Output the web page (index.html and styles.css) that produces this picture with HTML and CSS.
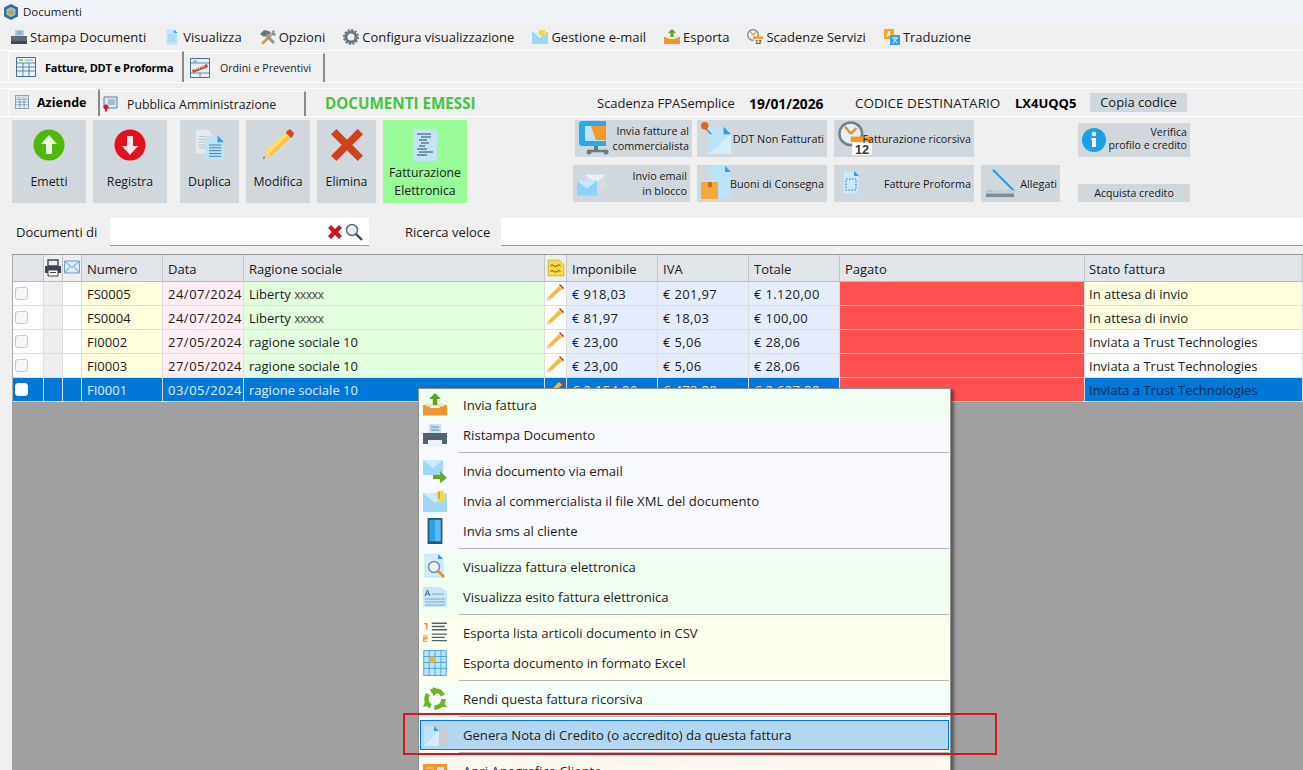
FILE: index.html
```html
<!DOCTYPE html>
<html lang="it">
<head>
<meta charset="utf-8">
<title>Documenti</title>
<link rel="stylesheet" href="styles.css">
</head>
<body>
<svg class="defs" width="0" height="0">
  <defs>
    <symbol id="i-logo" viewBox="0 0 16 16"><path d="M8 0l7 3.500v9L8 16l-7-3.500v-9z" fill="#3f6f8f"/><path d="M8 3l4.500 2.300v5.400L8 13l-4.500-2.300V5.300z" fill="#8fc0d8"/><path d="M5.500 6.500h5v4h-5z" fill="#c9a227"/></symbol>
    <symbol id="i-printer" viewBox="0 0 16 16"><path d="M4 1h9v7H4z" fill="#b9d3e6"/><path d="M5.500 3h6M5.500 5h6" stroke="#6f8ea5"/><path d="M0 7h16v7H0z" fill="#5d6b78"/><path d="M0 12h16v3H0z" fill="#3f4a54"/></symbol>
    <symbol id="i-doc" viewBox="0 0 16 16"><path d="M2.500 0.500h7.500l3.500 3.500v11.500h-11z" fill="#bfe3f8"/><path d="M10 .5l3.500 3.500H10z" fill="#3aa6e0"/><path d="M4.500 6h7M4.500 8h7M4.500 10h7M4.500 12h7" stroke="#8fc7e8" stroke-width=".7"/></symbol>
    <symbol id="i-tools" viewBox="0 0 16 16"><path d="M1 14L10 5l2 2-8.500 8.500z" fill="#e09a3e"/><path d="M15 13L6.500 4.500 4.500 6.500l8.500 8.500z" fill="#8a97a2"/><path d="M0 5l4-4 5 1 2 2-2 2-2-1-3 3z" fill="#6a7782"/><path d="M11 6l1-4 3-1-1 3 2 0-1 3z" fill="#8a97a2"/></symbol>
    <symbol id="i-gear" viewBox="0 0 16 16"><circle cx="8" cy="8" r="5" fill="none" stroke="#6b7780" stroke-width="3"/><circle cx="8" cy="8" r="7" fill="none" stroke="#6b7780" stroke-width="2" stroke-dasharray="2.200 1.460"/></symbol>
    <symbol id="i-mailtag" viewBox="0 0 16 16"><path d="M0 3h16v12H0z" fill="#9ed6f6"/><path d="M0 3l8 7 8-7" fill="#d5eefb" stroke="#6fbce8" stroke-width=".6"/><path d="M7 1h6v6l-3 1-3-3z" fill="#f6d64a"/></symbol>
    <symbol id="i-export" viewBox="0 0 16 16"><path d="M0 8h4l1 2h6l1-2h4v7H0z" fill="#f0962e"/><path d="M2 7h12v2H2z" fill="#f7e3c4"/><path d="M8 0l4 4H9.500v4h-3V4H4z" fill="#57a81c"/></symbol>
    <symbol id="i-clock" viewBox="0 0 24 24"><circle cx="9" cy="9" r="8" fill="#e9eef2" stroke="#75818a" stroke-width="1.800"/><path d="M9 9L5 4M9 9l4-4" stroke="#e8962e" stroke-width="1.800"/><path d="M9 11h15v4H9z" fill="#f59a23"/><path d="M10 15h14v9H10z" fill="#fff"/><text x="17" y="23" class="svg-num">12</text></symbol>
    <symbol id="i-trans" viewBox="0 0 16 16"><path d="M0 0h10v10H0z" fill="#f7a823"/><path d="M3 8l2-6 2 6M4 6h2" stroke="#fff" fill="none"/><path d="M6 6h10v10H6z" fill="#31a5e6"/><path d="M8 9h6M11 8v1M9 14l4-5M9.500 10l4 4" stroke="#fff" fill="none" stroke-width=".9"/></symbol>
    <symbol id="i-table" viewBox="0 0 20 20"><path d="M.5.5h19v19H.5z" fill="#e6f1f8" stroke="#45718f"/><path d="M1 6h18M1 10h18M1 14h18M7 6v13M13 6v13" stroke="#45718f" stroke-width=".8"/><path d="M3 2.500h4v1.500H3z" fill="#7fc56a"/><path d="M9 2.500h8v1.500H9z" fill="#a9c3d4"/></symbol>
    <symbol id="i-tablered" viewBox="0 0 20 20"><path d="M.5.5h19v19H.5z" fill="#e6f1f8" stroke="#45718f"/><path d="M1 5h18M1 15h18M10 15v4" stroke="#45718f" stroke-width=".8"/><path d="M3 2.500h4v1.500H3z" fill="#7fc56a"/><path d="M2 12L17 6l1 3L3 15z" fill="#d4403a"/><path d="M4.500 11.800l10-4" stroke="#fff" stroke-width="1.200" stroke-dasharray="1.500 .8"/></symbol>
    <symbol id="i-cert" viewBox="0 0 16 16"><path d="M2 1h13v11H2z" fill="#d9e7f1" stroke="#5a7f9a"/><path d="M6 4h7M6 6h7M6 8h7" stroke="#5a7f9a" stroke-width=".8"/><circle cx="4" cy="11" r="2.500" fill="#c0282e"/><path d="M3 13v3l1-1 1 1v-3z" fill="#c0282e"/></symbol>
    <symbol id="i-up" viewBox="0 0 32 32"><circle cx="16" cy="16" r="15.500" fill="#4eb90a"/><path d="M16 6l8 9h-5v10h-6V15H8z" fill="#eaf6df"/></symbol>
    <symbol id="i-down" viewBox="0 0 32 32"><circle cx="16" cy="16" r="15.500" fill="#e3101e"/><path d="M16 26L8 17h5V7h6v10h5z" fill="#fbe9e9"/></symbol>
    <symbol id="i-dup" viewBox="0 0 32 34"><path d="M1 1h13l5 5v20H1z" fill="#e6e9ec"/><path d="M4 8h11M4 11h11M4 14h11M4 17h11M4 20h11" stroke="#b5bec6"/><path d="M11 7h13l7 7v19H11z" fill="#bde3f9"/><path d="M24 7l7 7h-7z" fill="#2f9fdf"/><path d="M15 17h13M15 20h13M15 23h13M15 26h13M15 29h13" stroke="#3d7dab"/></symbol>
    <symbol id="i-pencil" viewBox="0 0 32 32"><path d="M23 4l5 5L9 27l-6 2 1-7z" fill="#f7c835"/><path d="M23 4l2.500 2.500L6.500 25l-3-3z" fill="#fbe06c"/><path d="M25 2l3-2 4 4-1 3-2 2-5-5z" fill="#cc4a22"/><path d="M4 22l5 5-7 3z" fill="#ecd3a8"/><path d="M2 27l1 2-2 1z" fill="#4a5158"/></symbol>
    <symbol id="i-x" viewBox="0 0 30 30"><path d="M5 0l10 10L25 0l5 5-10 10 10 10-5 5-10-10L5 30l-5-5 10-10L0 5z" fill="#d0421c"/></symbol>
    <symbol id="i-xred" viewBox="0 0 14 14"><path d="M3 0l4 4 4-4 3 3-4 4 4 4-3 3-4-4-4 4-3-3 4-4-4-4z" fill="#c8161c"/></symbol>
    <symbol id="i-fe" viewBox="0 0 24 32"><path d="M0 0h24v32H0z" fill="#c3e4f7"/><path d="M4 5h14M8 8h10M6 11h8M8 14h8M6 17h6M4 20h10M6 23h14M4 26h10" stroke="#33475a" stroke-width="1.200"/></symbol>
    <symbol id="i-monitor" viewBox="0 0 30 34"><path d="M3 0h24v25H3q-3 0-3-3V3q0-3 3-3z" fill="#2da8ea"/><path d="M6 5h21v15H6z" fill="#bfe3f8"/><path d="M12 5h15v14H17z" fill="#f59a23"/><path d="M15 25h4v5h-4z" fill="#6c7a86"/><path d="M10 30h17" stroke="#6c7a86" stroke-width="2.500"/><circle cx="10" cy="31" r="2.500" fill="#6c7a86"/><circle cx="27" cy="31" r="2.500" fill="#6c7a86"/></symbol>
    <symbol id="i-docpin" viewBox="0 0 32 34"><path d="M8 5h16l8 8v21H8z" fill="#bde3f9"/><path d="M8 34l24-21v21z" fill="#d6eefc"/><path d="M24 5l8 8h-8z" fill="#2f9fdf"/><circle cx="4" cy="4" r="4" fill="#e0641c"/><path d="M5 7l6 6" stroke="#6c7a86" stroke-width="1.500"/></symbol>
    <symbol id="i-mails" viewBox="0 0 36 30"><path d="M10 5h24v18H10z" fill="#d7dce0"/><path d="M10 5l12 10L34 5z" fill="#eef1f3"/><path d="M0 12h24v18H0z" fill="#8fd2f7"/><path d="M0 12l12 10 12-10z" fill="#c7e8fb"/></symbol>
    <symbol id="i-docbox" viewBox="0 0 30 34"><path d="M8 0h16l6 6v26H8z" fill="#bde3f9"/><path d="M24 0l6 6h-6z" fill="#2f9fdf"/><path d="M0 16h17v17H0z" fill="#f7a83a"/><path d="M7 16h4v5H7z" fill="#c96f1a"/></symbol>
    <symbol id="i-docdash" viewBox="0 0 18 24"><path d="M1 0h11l5 5v18H1z" fill="#cbe8fa" stroke="#a5d2ee" stroke-width=".5"/><path d="M12 0l5 5h-5z" fill="#2f9fdf"/><path d="M4 8h10v11H4z" fill="none" stroke="#2d6c94" stroke-dasharray="1.500 1.500"/></symbol>
    <symbol id="i-scanner" viewBox="0 0 34 32"><path d="M9 1l24 24" stroke="#2f9fdf" stroke-width="2.500"/><path d="M1 24h32v4H1z" fill="#c5ced4"/><path d="M1 28h32v4H1z" fill="#7f8c96"/><path d="M3 25h5" stroke="#6ea65a" stroke-dasharray="1 1"/></symbol>
    <symbol id="i-info" viewBox="0 0 24 24"><circle cx="12" cy="12" r="12" fill="#1f9fe3"/><circle cx="12" cy="6" r="2.200" fill="#fff"/><path d="M9.500 10h4.500v9h-4v-6.500H9.500z" fill="#fff"/></symbol>
    <symbol id="i-search" viewBox="0 0 18 18"><circle cx="7" cy="7" r="5.500" fill="#e4eef5" stroke="#5a6a76" stroke-width="1.500"/><path d="M11 11l6 6" stroke="#3d4a54" stroke-width="2.400"/></symbol>
    <symbol id="i-prt2" viewBox="0 0 18 18"><path d="M4 1h10v6H4z" fill="none" stroke="#3c4650" stroke-width="1.400"/><path d="M1 7h16v7H1z" fill="#3c4650"/><path d="M4 11h10v6H4z" fill="#fff" stroke="#3c4650"/><path d="M6 13.500h6" stroke="#3c4650"/></symbol>
    <symbol id="i-env2" viewBox="0 0 16 14"><path d="M.5 1h15v12H.5z" fill="#d9ecf8" stroke="#6f9dbd"/><path d="M1 1.500l7 6 7-6M1 12.500l5-6M15 12.500l-5-6" fill="none" stroke="#6f9dbd"/></symbol>
    <symbol id="i-note" viewBox="0 0 16 16"><path d="M1 1h10l4 4v10H1z" fill="#f5d94a" stroke="#c4a624" stroke-width=".6"/><path d="M3 6q1.500-1.500 3 0t3 0 3 0M3 11q1.500-1.500 3 0t3 0 3 0" fill="none" stroke="#5a4c10" stroke-width=".8"/></symbol>
    <symbol id="i-print3" viewBox="0 0 24 24"><path d="M6 1h12v9H6z" fill="#c7e2f3"/><path d="M8 4h8M8 7h8" stroke="#6b8aa0"/><path d="M0 10h24v11H0z" fill="#4f6272"/><path d="M5 17h14v7H5z" fill="#eef2f5"/></symbol>
    <symbol id="i-mailgo" viewBox="0 0 24 24"><path d="M0 1h20v15H0z" fill="#9fd8f8"/><path d="M0 1l10 8 10-8z" fill="#cdebfb"/><path d="M10 16h7v-4l7 7-7 5v-4h-7z" fill="#63ab24"/></symbol>
    <symbol id="i-mailclip" viewBox="0 0 24 24"><path d="M0 4h24v19H0z" fill="#9fd8f8"/><path d="M0 4l12 10L24 4z" fill="#cdebfb"/><path d="M13 4l7-3 3 9-7 4z" fill="#f6d64a"/><path d="M16 2v8" stroke="#9a8a30"/></symbol>
    <symbol id="i-tablet" viewBox="0 0 16 28"><path d="M0 0h16v28H0z" fill="#2f5675"/><path d="M2 2h12v23H2z" fill="#29a3ec"/><path d="M8 2h6v23H8z" fill="#5cbcf3"/></symbol>
    <symbol id="i-docsearch" viewBox="0 0 24 26"><path d="M2 0h13l5 5v18H2z" fill="#d3ecfb" stroke="#a8d4ee" stroke-width=".6"/><path d="M15 0l5 5h-5z" fill="#2f9fdf"/><circle cx="11" cy="13" r="5.500" fill="#eaf2f7" stroke="#7d8d98" stroke-width="1.500"/><path d="M15 17l6 6" stroke="#e8902e" stroke-width="2.600"/></symbol>
    <symbol id="i-outcome" viewBox="0 0 24 20"><path d="M0 0h18l6 5v15H0z" fill="#cbe6f8"/><path d="M2 9l2.500-6L7 9M3 7h3" stroke="#3d6d90" fill="none"/><path d="M9 7h12M2 12h20M2 15h20M2 18h20" stroke="#7fa6c2"/></symbol>
    <symbol id="i-list" viewBox="0 0 22 20"><path d="M8 1h14M8 4h12M8 7h14M8 11h14M8 14h12M8 17h14" stroke="#55626c" stroke-width="1.300"/><path d="M1 1h3v6H3V2H1z" fill="#e0641c"/><path d="M0 12h4v4H1v1h3v1H0v-4h3v-1H0z" fill="#e8962e"/></symbol>
    <symbol id="i-sheet" viewBox="0 0 20 22"><path d="M0 0h20v22H0z" fill="#c3e4f8"/><path d="M.5 .5h19v21H.5zM0 5.500h20M0 10.500h20M0 15.500h20M5 0v22M10 0v22M15 0v22" fill="none" stroke="#2f9fdf" stroke-width=".7"/><path d="M5 5.500h5v5H5z" fill="#f6b33a"/></symbol>
    <symbol id="i-recycle" viewBox="0 0 24 24"><circle cx="12" cy="12" r="8.500" fill="none" stroke="#6fb52c" stroke-width="4.500" stroke-dasharray="14 3.800"/><path d="M10 0l7 4-7 5zM0 20l3-8 5 6zM24 20l-9 0 4-7z" fill="#6fb52c"/></symbol>
    <symbol id="i-docgrey" viewBox="0 0 24 22"><path d="M9 0h10l5 5v17H9z" fill="#c7ced3"/><path d="M1 2h10l5 5v15H1z" fill="#bde3f9"/><path d="M1 22L16 7v15z" fill="#d6eefc"/><path d="M11 2l5 5h-5z" fill="#2f9fdf"/></symbol>
    <symbol id="i-card" viewBox="0 0 24 14"><path d="M0 0h24v14H0z" fill="#f0962e"/><path d="M3 4h8M3 7h8M3 10h8" stroke="#fbe0b8"/><path d="M14 3h7v8h-7z" fill="#cfe6f5"/></symbol>
    <symbol id="i-pen" viewBox="0 0 18 18"><path d="M13 2l3 3L5 15l-4 2 1-4z" fill="#f2be38"/><path d="M13 1l1-1 4 4-1 1.500z" fill="#b8442a"/><path d="M2 13l3 2-4 2z" fill="#e6d2a8"/></symbol>
  </defs>
</svg>

<div class="page">
  <header class="titlebar"><svg class="ico-16"><use href="#i-logo"/></svg><span>Documenti</span></header>

  <nav class="menubar">
    <span class="menu-entry"><svg class="ico-16"><use href="#i-printer"/></svg>Stampa Documenti</span>
    <span class="menu-entry"><svg class="ico-16"><use href="#i-doc"/></svg>Visualizza</span>
    <span class="menu-entry"><svg class="ico-16"><use href="#i-tools"/></svg>Opzioni</span>
    <span class="menu-entry"><svg class="ico-16"><use href="#i-gear"/></svg>Configura visualizzazione</span>
    <span class="menu-entry"><svg class="ico-16"><use href="#i-mailtag"/></svg>Gestione e-mail</span>
    <span class="menu-entry"><svg class="ico-16"><use href="#i-export"/></svg>Esporta</span>
    <span class="menu-entry"><svg class="ico-16"><use href="#i-clock"/></svg>Scadenze Servizi</span>
    <span class="menu-entry"><svg class="ico-16"><use href="#i-trans"/></svg>Traduzione</span>
  </nav>

  <div class="tabstrip tabstrip-main">
    <div class="tab tab-main active"><svg class="ico-20"><use href="#i-table"/></svg><b>Fatture, DDT e Proforma</b></div>
    <div class="tab tab-orders"><svg class="ico-20"><use href="#i-tablered"/></svg><span>Ordini e Preventivi</span></div>
  </div>

  <div class="tabstrip tabstrip-sub">
    <div class="tab tab-aziende active"><svg class="ico-14"><use href="#i-table"/></svg><b>Aziende</b></div>
    <div class="tab tab-pa"><svg class="ico-16"><use href="#i-cert"/></svg><span>Pubblica Amministrazione</span></div>
    <div class="status">
      <strong class="status-title">DOCUMENTI EMESSI</strong>
      <span class="status-scad">Scadenza FPASemplice</span>
      <b class="status-date">19/01/2026</b>
      <span class="status-code">CODICE DESTINATARIO</span>
      <b class="status-val">LX4UQQ5</b>
      <span class="copy-btn">Copia codice</span>
    </div>
  </div>

  <section class="toolbar">
    <div class="bigs">
      <div class="big w74"><svg class="big-ico"><use href="#i-up"/></svg><span>Emetti</span></div>
      <div class="big w74"><svg class="big-ico"><use href="#i-down"/></svg><span>Registra</span></div>
      <div class="big w59 gap-l"><svg class="big-ico"><use href="#i-dup"/></svg><span>Duplica</span></div>
      <div class="big w64"><svg class="big-ico"><use href="#i-pencil"/></svg><span>Modifica</span></div>
      <div class="big w59"><svg class="big-ico"><use href="#i-x"/></svg><span>Elimina</span></div>
      <div class="big w84 big-green"><svg class="big-ico"><use href="#i-fe"/></svg><span>Fatturazione<br>Elettronica</span></div>
    </div>
    <div class="smalls">
      <div class="small-row row-a">
        <div class="small w117"><svg class="sm-ico"><use href="#i-monitor"/></svg><span>Invia fatture al<br>commercialista</span></div>
        <div class="small w130"><svg class="sm-ico"><use href="#i-docpin"/></svg><span>DDT Non Fatturati</span></div>
        <div class="small w140"><svg class="sm-ico overlap"><use href="#i-clock"/></svg><span>Fatturazione ricorsiva</span></div>
      </div>
      <div class="small-row">
        <div class="small w117"><svg class="sm-ico"><use href="#i-mails"/></svg><span>Invio email<br>in blocco</span></div>
        <div class="small w130"><svg class="sm-ico overlap-s"><use href="#i-docbox"/></svg><span>Buoni di Consegna</span></div>
        <div class="small w140"><svg class="sm-dash"><use href="#i-docdash"/></svg><span>Fatture Proforma</span></div>
        <div class="small w79"><svg class="sm-ico overlap-s"><use href="#i-scanner"/></svg><span>Allegati</span></div>
      </div>
    </div>
    <div class="side">
      <div class="small side-verify"><svg class="ico-24"><use href="#i-info"/></svg><span>Verifica<br>profilo e credito</span></div>
      <div class="side-buy">Acquista credito</div>
    </div>
  </section>

  <section class="searchbar">
    <label class="search-label">Documenti di</label>
    <div class="search-input"><svg class="ico-14"><use href="#i-xred"/></svg><svg class="ico-18"><use href="#i-search"/></svg></div>
    <label class="search-label label-fast">Ricerca veloce</label>
    <div class="fast-input"></div>
  </section>

  <section class="grid-area">
    <div class="grid">
      <div class="row head">
        <div></div><div class="cell-ico"><svg class="ico-18"><use href="#i-prt2"/></svg></div><div class="cell-ico"><svg class="ico-env"><use href="#i-env2"/></svg></div>
        <div>Numero</div><div>Data</div><div>Ragione sociale</div><div class="cell-ico"><svg class="ico-18"><use href="#i-note"/></svg></div><div>Imponibile</div><div>IVA</div><div>Totale</div><div>Pagato</div><div class="pad4">Stato fattura</div>
      </div>
      <div class="row">
        <div class="c-check"><i class="check"></i></div><div class="c-grey"></div><div class="c-white"></div>
        <div class="c-num">FS0005</div><div class="c-date">24/07/2024</div><div class="c-name">Liberty <small>xxxxx</small></div><div class="c-pen"><svg class="ico-18"><use href="#i-pen"/></svg></div>
        <div class="c-amt">€ 918,03</div><div class="c-amt">€ 201,97</div><div class="c-amt">€ 1.120,00</div><div class="c-paid"></div><div class="c-state pad4 wait">In attesa di invio</div>
      </div>
      <div class="row">
        <div class="c-check"><i class="check"></i></div><div class="c-grey"></div><div class="c-white"></div>
        <div class="c-num">FS0004</div><div class="c-date">24/07/2024</div><div class="c-name">Liberty <small>xxxxx</small></div><div class="c-pen"><svg class="ico-18"><use href="#i-pen"/></svg></div>
        <div class="c-amt">€ 81,97</div><div class="c-amt">€ 18,03</div><div class="c-amt">€ 100,00</div><div class="c-paid"></div><div class="c-state pad4 wait">In attesa di invio</div>
      </div>
      <div class="row">
        <div class="c-check"><i class="check"></i></div><div class="c-grey"></div><div class="c-white"></div>
        <div class="c-num">FI0002</div><div class="c-date">27/05/2024</div><div class="c-name">ragione sociale 10</div><div class="c-pen"><svg class="ico-18"><use href="#i-pen"/></svg></div>
        <div class="c-amt">€ 23,00</div><div class="c-amt">€ 5,06</div><div class="c-amt">€ 28,06</div><div class="c-paid"></div><div class="c-state pad4">Inviata a Trust Technologies</div>
      </div>
      <div class="row">
        <div class="c-check"><i class="check"></i></div><div class="c-grey"></div><div class="c-white"></div>
        <div class="c-num">FI0003</div><div class="c-date">27/05/2024</div><div class="c-name">ragione sociale 10</div><div class="c-pen"><svg class="ico-18"><use href="#i-pen"/></svg></div>
        <div class="c-amt">€ 23,00</div><div class="c-amt">€ 5,06</div><div class="c-amt">€ 28,06</div><div class="c-paid"></div><div class="c-state pad4">Inviata a Trust Technologies</div>
      </div>
      <div class="row selected">
        <div class="c-check"><i class="check"></i></div><div class="c-grey"></div><div class="c-white"></div>
        <div class="c-num">FI0001</div><div class="c-date">03/05/2024</div><div class="c-name">ragione sociale 10</div><div class="c-pen"><svg class="ico-18"><use href="#i-pen"/></svg></div>
        <div class="c-amt">€ 2.154,00</div><div class="c-amt">€ 473,88</div><div class="c-amt">€ 2.627,88</div><div class="c-paid"></div><div class="c-state pad4">Inviata a Trust Technologies</div>
      </div>
    </div>
  </section>

  <aside class="context">
    <div class="ctx-item bg-green"><svg class="ctx-ico"><use href="#i-export"/></svg>Invia fattura</div>
    <div class="ctx-group bg-ghost">
      <div class="ctx-item"><svg class="ctx-ico"><use href="#i-print3"/></svg>Ristampa Documento</div>
      <div class="ctx-sep"></div>
      <div class="ctx-item"><svg class="ctx-ico"><use href="#i-mailgo"/></svg>Invia documento via email</div>
      <div class="ctx-item"><svg class="ctx-ico"><use href="#i-mailclip"/></svg>Invia al commercialista il file XML del documento</div>
      <div class="ctx-item"><svg class="ctx-ico"><use href="#i-tablet"/></svg>Invia sms al cliente</div>
      <div class="ctx-sep"></div>
    </div>
    <div class="ctx-group bg-green">
      <div class="ctx-item"><svg class="ctx-ico"><use href="#i-docsearch"/></svg>Visualizza fattura elettronica</div>
      <div class="ctx-item"><svg class="ctx-ico"><use href="#i-outcome"/></svg>Visualizza esito fattura elettronica</div>
      <div class="ctx-sep"></div>
    </div>
    <div class="ctx-group bg-ivory">
      <div class="ctx-item"><svg class="ctx-ico"><use href="#i-list"/></svg>Esporta lista articoli documento in CSV</div>
      <div class="ctx-item"><svg class="ctx-ico"><use href="#i-sheet"/></svg>Esporta documento in formato Excel</div>
      <div class="ctx-sep"></div>
    </div>
    <div class="ctx-group bg-mint">
      <div class="ctx-item"><svg class="ctx-ico"><use href="#i-recycle"/></svg>Rendi questa fattura ricorsiva</div>
      <div class="ctx-sep"></div>
      <div class="ctx-item ctx-selected"><svg class="ctx-ico"><use href="#i-docgrey"/></svg>Genera Nota di Credito (o accredito) da questa fattura</div>
    </div>
    <div class="ctx-group bg-old">
      <div class="ctx-sep"></div>
      <div class="ctx-item"><svg class="ctx-ico"><use href="#i-card"/></svg>Apri Anagrafica Cliente</div>
    </div>
  </aside>
  <div class="redbox"></div>
</div>
</body>
</html>
```

FILE: styles.css
```css
* { box-sizing: border-box; }
html, body { margin: 0; padding: 0; height: 100%; overflow: hidden; }
body { font-family: "Open Sans", "Noto Sans", "Liberation Sans", sans-serif; font-size: 13px; color: #1a1a1a; background: #f0f0f0; }
.defs { position: absolute; }
.svg-num { font: bold 9px "Liberation Sans", sans-serif; text-anchor: middle; fill: #333; }
.page { position: relative; width: 1303px; height: 770px; display: flex; flex-direction: column; overflow: hidden; }

.ico-14 { width: 14px; height: 14px; flex: none; }
.ico-16 { width: 16px; height: 16px; flex: none; }
.ico-18 { width: 18px; height: 18px; flex: none; }
.ico-20 { width: 20px; height: 20px; flex: none; }
.ico-24 { width: 24px; height: 24px; flex: none; }
.ico-env { width: 16px; height: 14px; flex: none; margin-top: -3px; }

.titlebar { height: 23px; background: #f0f3f7; display: flex; align-items: center; gap: 4px; padding-left: 3px; font-size: 11.5px; }

.menubar { height: 28px; display: flex; align-items: center; padding-left: 11px; gap: 18px; border-bottom: 1px solid #fff; background: #f0f0f0; }
.menu-entry { display: flex; align-items: center; gap: 3px; white-space: nowrap; }

.tabstrip { display: flex; align-items: flex-end; }
.tabstrip-main { height: 32px; padding-left: 8px; border-bottom: 1px solid #fff; margin-bottom: 5px; }
.tabstrip-sub { height: 29px; padding-left: 8px; border-top: 1px solid #fff; border-bottom: 1px solid #fff; }
.tab { display: flex; align-items: center; border-right: 2px solid #8a8a8a; border-top: 1px solid #fff; height: 100%; }
.tab-main { width: 176px; gap: 9px; padding-left: 7px; border-left: 1px solid #fff; font-size: 11px; letter-spacing: -.25px; }
.tab-main b { color: #000; }
.tab-orders { width: 141px; height: 29px; gap: 10px; padding-left: 6px; font-size: 10.6px; }
.tab-aziende { width: 92px; gap: 8px; padding-left: 6px; font-size: 12.5px; border-left: 1px solid #fff; padding-bottom: 2px; }
.tab-aziende b { color: #000; }
.tab-pa { width: 206px; height: 25px; gap: 9px; padding-left: 2px; font-size: 12.3px; }

.status { display: flex; align-items: center; height: 100%; flex: 1; padding-top: 1px; }
.status-title { margin-left: 19px; width: 272px; color: #41c63d; font-size: 15.2px; white-space: nowrap; }
.status-scad { width: 152px; white-space: nowrap; }
.status-date { width: 106px; color: #000; font-size: 13.8px; white-space: nowrap; }
.status-code { width: 160px; font-size: 13.5px; white-space: nowrap; }
.status-val { width: 75px; color: #000; white-space: nowrap; }
.copy-btn { width: 97px; height: 19px; background: #d0d8de; text-align: center; line-height: 19px; font-size: 13px; margin-top: -1px; }

.toolbar { display: flex; padding: 3px 0 0 12px; height: 101px; }
.bigs { display: flex; gap: 7px; height: 83px; }
.big { height: 83px; background: #d0d8de; display: flex; flex-direction: column; align-items: center; padding-top: 9px; text-align: center; font-size: 12.3px; line-height: 18px; }
.big span { margin-top: 12px; }
.big-ico { width: 32px; height: 32px; flex: none; }
.big-green { background: #98fb98; }
.big-green span { margin-top: 3px; }
.w74 { width: 74px; } .w59 { width: 59px; } .w64 { width: 64px; } .w84 { width: 84px; }
.gap-l { margin-left: 6px; }

.smalls { display: flex; flex-direction: column; gap: 8px; margin-left: 106px; }
.small-row { display: flex; gap: 7px; height: 37px; }
.row-a { margin-left: 2px; gap: 5px; }
.row-a .w130 { margin-right: 2px; }
.small { height: 37px; background: #d0d8de; display: flex; align-items: center; justify-content: space-between; padding: 0 3px 1px 4px; font-size: 10.8px; line-height: 15px; text-align: right; white-space: nowrap; }
.sm-ico { width: 30px; height: 34px; flex: none; }
.sm-dash { width: 18px; height: 24px; flex: none; margin-left: 4px; }
.overlap { margin-right: -24px; width: 34px; }
.overlap-s { margin-right: -6px; }
.w117 { width: 117px; } .w130 { width: 130px; } .w140 { width: 140px; } .w79 { width: 79px; }

.side { width: 112px; margin-left: 18px; display: flex; flex-direction: column; padding-top: 3px; }
.side-verify { height: 34px; line-height: 13px; font-size: 10.6px; padding-bottom: 3px; }
.side-verify .ico-24 { margin-top: 3px; }
.side-buy { margin-top: 27px; height: 18px; background: #d0d8de; text-align: center; line-height: 18px; font-size: 10.6px; }

.searchbar { display: flex; align-items: flex-start; height: 36px; }
.search-label { width: 110px; padding-left: 16px; line-height: 28px; }
.search-input { width: 259px; height: 28px; background: #fff; border-bottom: 1px solid #999; display: flex; align-items: center; justify-content: flex-end; gap: 3px; padding-right: 6px; }
.label-fast { width: 132px; padding-left: 36px; }
.fast-input { flex: 1; height: 28px; background: #fff; border-bottom: 1px solid #999; }

.grid-area { flex: 1; margin-left: 12px; background: #a0a0a0; border-top: 1px solid #999; }
.grid { border-left: 1px solid #aaa; }
.row { display: grid; grid-template-columns: 31px 19px 19px 81px 81px 301px 22px 91px 91px 91px 245px 1fr; height: 24px; }
.row > div { border-right: 1px solid #ddd; border-bottom: 1px solid #ddd; padding: 1px 0 0 5px; line-height: 23px; white-space: nowrap; overflow: hidden; }
.row > .pad4 { padding-left: 4px; }
.head { height: 27px; background: #e1e4e8; }
.head > div { border-right-color: #c4c4c4; border-bottom-color: #bbb; line-height: 26px; }
.row > .cell-ico { padding: 0; display: flex; align-items: center; justify-content: center; background: #eceef0; }
.c-check { background: #fff; }
.row > .c-check { padding: 0 0 0 2px; display: flex; align-items: center; }
.check { display: block; width: 13px; height: 13px; border: 1px solid #c8c8c8; border-radius: 3px; background: #f6f6f6; }
.c-grey { background: #eeeeee; }
.c-white { background: #fff; }
.c-num { background: #ffffe0; }
.c-date { background: #ffeef4; letter-spacing: .5px; }
.c-name { background: #e2ffdf; }
.c-name small { font-size: 12px; letter-spacing: -.4px; color: #444; }
.row > .c-pen { background: #fff; padding: 2px 0 0 1px; display: flex; align-items: flex-start; }
.c-amt { background: #e6eefe; letter-spacing: .35px; }
.c-paid { background: #ff5050; }
.c-state { background: #fff; }
.wait { background: #ffffe0; }
.selected .c-check, .selected .c-grey, .selected .c-white, .selected .c-num, .selected .c-date, .selected .c-name, .selected .c-amt, .selected .c-state, .selected .c-pen { background: #0078d7; }
.selected > div { color: #e3effa; }
.selected > .c-state { color: #0d2c50; }
.selected .check { background: #fff; border-color: #fff; }

.context { position: absolute; left: 418px; top: 388px; width: 533px; height: 400px; background: #f8f8ff; border: 1px solid #8f8f8f; border-bottom: 0; padding: 1px 1px 0 1px; box-shadow: 3px 2px 3px rgba(0,0,0,.45); font-size: 13.1px; }
.ctx-item { height: 30px; display: flex; align-items: center; gap: 16px; padding-left: 3px; white-space: nowrap; color: #1c1c1c; }
.ctx-ico { width: 24px; height: 26px; flex: none; }
.ctx-sep { height: 6px; position: relative; }
.ctx-sep::after { content: ""; position: absolute; left: 39px; right: 0; top: 2px; height: 1px; background: #b5b5ba; }
.bg-green { background: #f0fff0; }
.bg-ghost { background: #f8f8ff; }
.bg-ivory { background: #fffff0; }
.bg-mint { background: #f5fffa; }
.bg-old { background: #fff8f0; }
.ctx-selected { background: #b3d7f3; border: 1px solid #0078d7; padding-left: 2px; }
.redbox { position: absolute; left: 403px; top: 713px; width: 594px; height: 42px; border: 2px solid #cc1a1e; }
```
